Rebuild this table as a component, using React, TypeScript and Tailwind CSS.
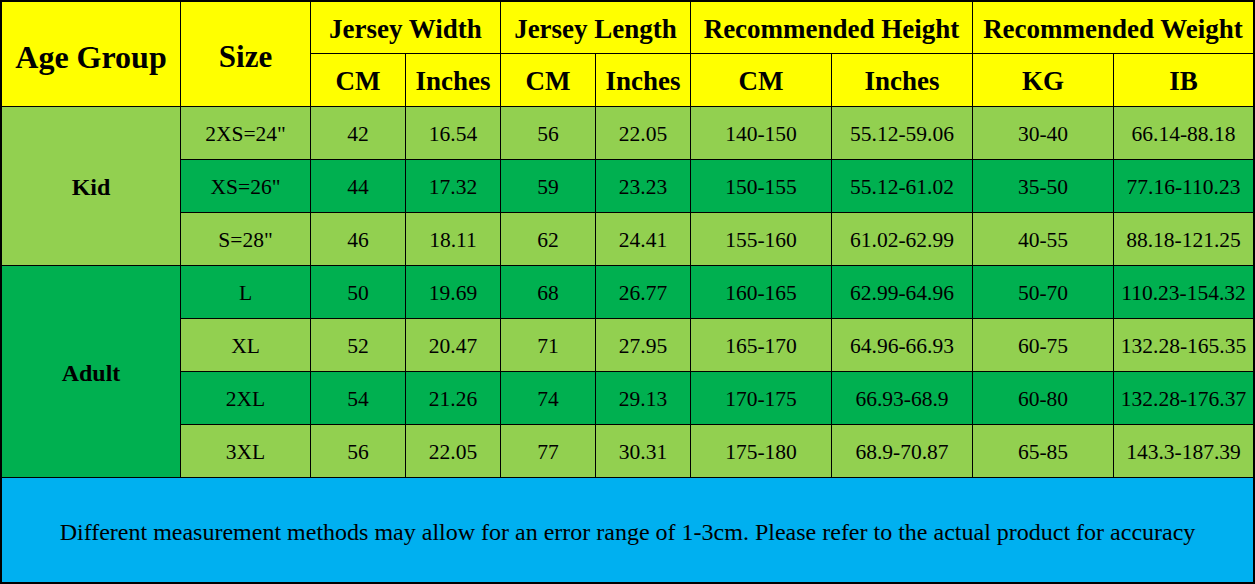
import React from "react";

type Row = { size: string; vals: string[]; dark: boolean };

const kidRows: Row[] = [
  { size: '2XS=24"', vals: ["42", "16.54", "56", "22.05", "140-150", "55.12-59.06", "30-40", "66.14-88.18"], dark: false },
  { size: 'XS=26"', vals: ["44", "17.32", "59", "23.23", "150-155", "55.12-61.02", "35-50", "77.16-110.23"], dark: true },
  { size: 'S=28"', vals: ["46", "18.11", "62", "24.41", "155-160", "61.02-62.99", "40-55", "88.18-121.25"], dark: false },
];

const adultRows: Row[] = [
  { size: "L", vals: ["50", "19.69", "68", "26.77", "160-165", "62.99-64.96", "50-70", "110.23-154.32"], dark: true },
  { size: "XL", vals: ["52", "20.47", "71", "27.95", "165-170", "64.96-66.93", "60-75", "132.28-165.35"], dark: false },
  { size: "2XL", vals: ["54", "21.26", "74", "29.13", "170-175", "66.93-68.9", "60-80", "132.28-176.37"], dark: true },
  { size: "3XL", vals: ["56", "22.05", "77", "30.31", "175-180", "68.9-70.87", "65-85", "143.3-187.39"], dark: false },
];

const cell = "flex items-center justify-center text-black";
const head = `${cell} bg-[#FFFF00] font-bold text-[27px] pt-[3px]`;

// one size row: size column + 8 measurement cells
function SizeRow({ row }: { row: Row }) {
  const bg = row.dark ? "bg-[#00B050]" : "bg-[#92D050]";
  return (
    <>
      <div className={`${cell} ${bg} text-[21.5px] pt-[2px] col-start-2`}>{row.size}</div>
      {row.vals.map((v, i) => (
        <div key={i} className={`${cell} ${bg} text-[21.5px] pt-[2px]`}>
          {v}
        </div>
      ))}
    </>
  );
}

export default function App() {
  return (
    <div
      className="w-[1255px] h-[584px] bg-black p-[2px] grid gap-px grid-cols-[178px_129px_94px_94px_94px_94px_140px_140px_140px_139px] grid-rows-[51px_52px_52px_52px_52px_52px_52px_52px_52px_104px]"
      style={{ fontFamily: '"Liberation Serif", "Times New Roman", serif' }}
    >
      {/* header */}
      <div className={`${cell} bg-[#FFFF00] font-bold text-[32px] pt-[6px] row-span-2`}>Age Group</div>
      <div className={`${cell} bg-[#FFFF00] font-bold text-[31px] pt-[6px] row-span-2`}>Size</div>
      <div className={`${head} col-span-2`}>Jersey Width</div>
      <div className={`${head} col-span-2`}>Jersey Length</div>
      <div className={`${head} col-span-2`}>Recommended Height</div>
      <div className={`${head} col-span-2`}>Recommended Weight</div>

      <div className={head}>CM</div>
      <div className={head}>Inches</div>
      <div className={head}>CM</div>
      <div className={head}>Inches</div>
      <div className={head}>CM</div>
      <div className={head}>Inches</div>
      <div className={head}>KG</div>
      <div className={head}>IB</div>

      {/* kid */}
      <div className={`${cell} bg-[#92D050] font-bold text-[24px] pt-[2px] row-span-3 col-start-1 row-start-3`}>Kid</div>
      {kidRows.map((r, i) => (
        <SizeRow key={i} row={r} />
      ))}

      {/* adult */}
      <div className={`${cell} bg-[#00B050] font-bold text-[24px] pt-[2px] row-span-4 col-start-1 row-start-6`}>Adult</div>
      {adultRows.map((r, i) => (
        <SizeRow key={i} row={r} />
      ))}

      {/* note */}
      <div className={`${cell} bg-[#00B0F0] col-span-10 text-[24px] pt-[4px]`}>
        Different measurement methods may allow for an error range of 1-3cm. Please refer to the actual product for accuracy
      </div>
    </div>
  );
}
